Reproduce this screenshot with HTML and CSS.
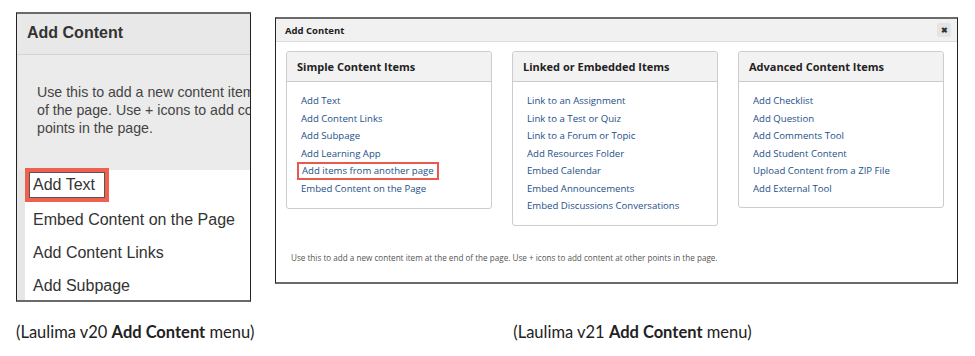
FILE: index.html
```html
<!DOCTYPE html>
<html lang="en">
<head>
    <meta charset="UTF-8">
    <title>Add Content menu: v20 vs v21</title>
    <link rel="stylesheet" href="styles.css">
</head>
<body>
    <div class="compare">
        <!-- v20 -->
        <div class="old-panel">
            <div class="old-head">Add Content</div>
            <div class="old-intro">
                <p>Use this to add a new content item at the end<br>of the page. Use + icons to add content at other<br>points in the page.</p>
            </div>
            <ul class="old-list">
                <li><span class="mark-old">Add Text</span></li>
                <li>Embed Content on the Page</li>
                <li>Add Content Links</li>
                <li>Add Subpage</li>
            </ul>
        </div>

        <!-- v21 -->
        <div class="new-panel">
            <div class="new-head">
                <span>Add Content</span>
                <span class="close">&#10006;</span>
            </div>
            <div class="new-body">
                <div class="cards">
                    <div class="card">
                        <div class="card-head">Simple Content Items</div>
                        <ul class="card-links">
                            <li><a>Add Text</a></li>
                            <li><a>Add Content Links</a></li>
                            <li><a>Add Subpage</a></li>
                            <li><a>Add Learning App</a></li>
                            <li><a class="mark-new">Add items from another page</a></li>
                            <li><a>Embed Content on the Page</a></li>
                        </ul>
                    </div>
                    <div class="card">
                        <div class="card-head">Linked or Embedded Items</div>
                        <ul class="card-links">
                            <li><a>Link to an Assignment</a></li>
                            <li><a>Link to a Test or Quiz</a></li>
                            <li><a>Link to a Forum or Topic</a></li>
                            <li><a>Add Resources Folder</a></li>
                            <li><a>Embed Calendar</a></li>
                            <li><a>Embed Announcements</a></li>
                            <li><a>Embed Discussions Conversations</a></li>
                        </ul>
                    </div>
                    <div class="card">
                        <div class="card-head">Advanced Content Items</div>
                        <ul class="card-links">
                            <li><a>Add Checklist</a></li>
                            <li><a>Add Question</a></li>
                            <li><a>Add Comments Tool</a></li>
                            <li><a>Add Student Content</a></li>
                            <li><a>Upload Content from a ZIP File</a></li>
                            <li><a>Add External Tool</a></li>
                        </ul>
                    </div>
                </div>
                <p class="new-note">Use this to add a new content item at the end of the page. Use + icons to add content at other points in the page.</p>
            </div>
        </div>

        <p class="caption">(Laulima v20 <b>Add Content</b> menu)</p>
        <p class="caption caption-new">(Laulima v21 <b>Add Content</b> menu)</p>
    </div>
</body>
</html>
```

FILE: styles.css
```css
body { margin: 0; background: #fff; }
ul { list-style: none; margin: 0; padding: 0; }
p { margin: 0; }

.compare { display: grid; grid-template-columns: 235px 683px; column-gap: 24px; padding: 12px 0 0 16px; align-items: start; }

/* v20 panel */
.old-panel { height: 290px; box-sizing: border-box; border: 1px solid #222; border-top: 2px solid #6a6a6a; border-bottom: 2px solid #6a6a6a; overflow: hidden; font-family: "Liberation Sans", Arial, sans-serif; color: #333; background: #e6e6e6; }
.old-head { height: 40px; line-height: 38px; padding-left: 10px; font-size: 16px; font-weight: bold; background: #e8e8e8; border-bottom: 1px solid #d4d4d4; }
.old-intro { height: 115px; margin-left: 2px; background: #ebebeb; padding: 28px 0 0 18px; box-sizing: border-box; }
.old-intro p { white-space: nowrap; font-size: 14.2px; line-height: 18px; color: #444; }
.old-list { margin-left: 8px; background: #fff; height: 130px; }
.old-list li { height: 33px; line-height: 33px; padding-left: 8px; font-size: 16px; white-space: nowrap; }
.old-list li:first-child { line-height: 30px; }
.mark-old { display: inline-block; vertical-align: top; line-height: 26px; margin: -2px 0 0 -8px; padding: 0 10px 0 4px; border: 4px solid #f0604f; box-shadow: inset 0 0 0 1px #555; }

/* v21 panel */
.new-panel { margin-top: 5px; height: 267px; box-sizing: border-box; border: 1px solid #222; border-top: 2px solid #6a6a6a; border-bottom: 2px solid #6a6a6a; font-family: "Open Sans", sans-serif; background: #fff; }
.new-head { display: flex; justify-content: space-between; align-items: center; height: 22px; padding: 0 6px 0 9px; background: #f1f1f1; border-bottom: 1px solid #ddd; font-size: 9.5px; font-weight: bold; color: #222; }
.close { width: 14px; height: 14px; line-height: 14px; text-align: center; border-radius: 2px; background: #e4e4e4; font-size: 8px; color: #333; }
.new-body { padding: 9px 0 0 10px; }
.cards { display: flex; gap: 20px; align-items: flex-start; }
.card { width: 206px; box-sizing: border-box; border: 1px solid #ccc; border-radius: 3px; }
.card-head { height: 29px; line-height: 29px; padding-left: 10px; background: #f2f2f2; border-bottom: 1px solid #ccc; border-radius: 3px 3px 0 0; font-size: 11px; font-weight: bold; color: #222; }
.card-links { padding: 10px 0 10px 14px; }
.card-links li { line-height: 17.5px; font-size: 9.6px; white-space: nowrap; }
.card-links a { color: #24508a; }
.mark-new { display: inline-block; line-height: 14px; margin-left: -4px; padding: 0 3px 0 3px; border: 2px solid #ea5a4c; }
.new-note { margin: 25px 0 0 5px; font-size: 8.15px; line-height: 14px; color: #555; }

/* captions */
.caption { margin-top: 19px; text-align: center; font-family: Lato, sans-serif; font-size: 16.5px; line-height: 22px; color: #222; white-space: nowrap; }
.caption-new { padding-left: 32px; }
```
